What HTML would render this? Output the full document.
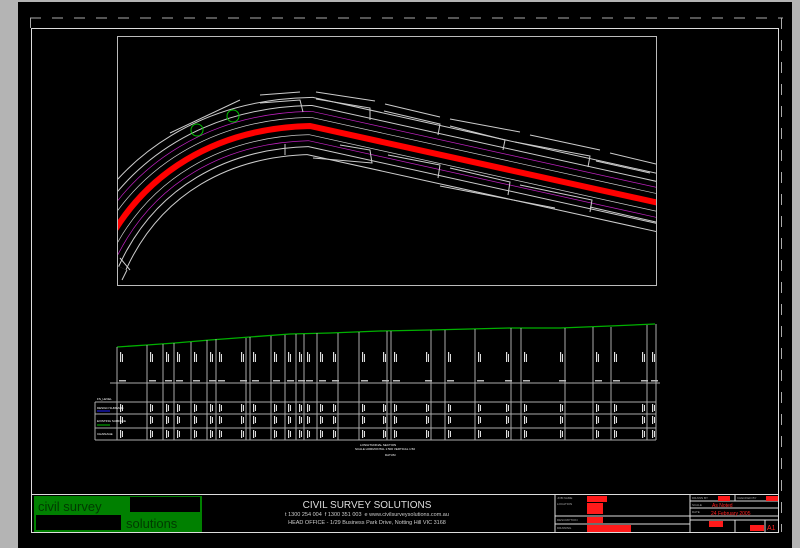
<!DOCTYPE html>
<html><head><meta charset="utf-8"><style>
html,body{margin:0;padding:0;background:#b4b4b4;width:800px;height:548px;overflow:hidden}
svg{position:absolute;left:0;top:0}
text{font-family:"Liberation Sans",sans-serif}
</style></head><body>
<svg width="800" height="548" viewBox="0 0 800 548">
<defs>
<clipPath id="vp"><rect x="118" y="37" width="538" height="248"/></clipPath>
<g id="lab"><rect x="1" y="352" width="1.2" height="10" fill="#ddd"/><rect x="3" y="354" width="1" height="8" fill="#ddd"/>
<rect x="0" y="380" width="7" height="1.5" fill="#bbb"/>
<rect x="1" y="404" width="1.2" height="8" fill="#ddd"/><rect x="3" y="405" width="1" height="6" fill="#ddd"/>
<rect x="1" y="416" width="1.2" height="8" fill="#ddd"/><rect x="3" y="417" width="1" height="6" fill="#ddd"/>
<rect x="1" y="430" width="1.2" height="8" fill="#ddd"/><rect x="3" y="431" width="1" height="6" fill="#ddd"/></g>
</defs>
<rect x="18" y="2" width="774" height="546" fill="#000"/>
<line x1="30" y1="18" x2="783" y2="18" stroke="#aaa" stroke-width="1" stroke-dasharray="11,11"/>
<line x1="30.5" y1="18" x2="30.5" y2="28" stroke="#aaa"/>
<line x1="781.5" y1="18" x2="781.5" y2="532" stroke="#aaa" stroke-dasharray="11,11"/>
<rect x="31.5" y="28.5" width="747" height="504" fill="none" stroke="#ddd" stroke-width="1"/>
<rect x="117.5" y="36.5" width="539" height="249" fill="none" stroke="#bbb"/>
<g clip-path="url(#vp)" fill="none">
<path d="M100,258 C140,170 220,128 310,126 L700,212" stroke="#ccc" stroke-width="58"/>
<path d="M100,258 C140,170 220,128 310,126 L700,212" stroke="#000" stroke-width="56"/>
<path d="M100,258 C140,170 220,128 310,126 L700,212" stroke="#ccc" stroke-width="42"/>
<path d="M100,258 C140,170 220,128 310,126 L700,212" stroke="#000" stroke-width="40"/>
<path d="M100,258 C140,170 220,128 310,126 L700,212" stroke="#c020c0" stroke-width="30"/>
<path d="M100,258 C140,170 220,128 310,126 L700,212" stroke="#000" stroke-width="28.6"/>
<path d="M100,258 C140,170 220,128 310,126 L700,212" stroke="#ccc" stroke-width="18"/>
<path d="M100,258 C140,170 220,128 310,126 L700,212" stroke="#000" stroke-width="16.6"/>
<path d="M100,258 C140,170 220,128 310,126 L700,212" stroke="#ff0000" stroke-width="6"/>
<g stroke="#ccc" stroke-width="1">
<path d="M170,133 L240,100 M260,95 L300,92 M316,92 L375,101 M385,104 L440,117 M450,119 L520,132 M530,135 L600,150 M610,153 L656,164"/>
<path d="M260,103 L300,100 L303,112 M316,99 L370,108 L370,120 M384,111 L440,124 L438,135 M450,126 L505,140 L503,150 M515,142 L590,156 L588,167 M596,161 L650,173"/>
<path d="M285,144 L285,155 M340,145 L370,150 L372,163 L313,158 M388,155 L440,165 L438,178 M450,168 L510,182 L508,195 M520,185 L592,200 L590,212"/>
<path d="M440,186 L555,208 M590,207 L656,222 M120,258 L130,270 M122,280 L127,270"/>
</g>
<circle cx="197" cy="130" r="6" stroke="#00c000"/>
<circle cx="233" cy="116" r="6" stroke="#00c000"/>
</g>
<polyline points="117,347 147,345 175,343 210,340 250,337 290,334 330,333 380,331 430,330 470,329 510,328 560,328 610,326 655,324" fill="none" stroke="#00b000" stroke-width="1.3"/>
<g stroke="#aaa" stroke-width="1">
<path d="M117,347V440 M147,345V440 M163,344V440 M174,343V440 M191,342V440 M207,340V440 M216,339V440 M246,338V440 M250,337V440 M271,336V440 M285,335V440 M296,334V440 M304,334V440 M317,333V440 M338,333V440 M359,332V440 M387,331V440 M391,331V440 M431,330V440 M445,330V440 M475,329V440 M511,328V440 M521,328V440 M565,328V440 M593,327V440 M611,327V440 M647,325V440 M656,324V440"/>
<path d="M110,383H660 M95,402H656 M95,414H656 M95,428H656 M95,440H656 M95,402V440"/>
</g>
<g>
<use href="#lab" x="119"/><use href="#lab" x="149"/><use href="#lab" x="165"/><use href="#lab" x="176"/><use href="#lab" x="193"/><use href="#lab" x="209"/><use href="#lab" x="218"/><use href="#lab" x="240"/><use href="#lab" x="252"/><use href="#lab" x="273"/><use href="#lab" x="287"/><use href="#lab" x="298"/><use href="#lab" x="306"/><use href="#lab" x="319"/><use href="#lab" x="332"/><use href="#lab" x="361"/><use href="#lab" x="382"/><use href="#lab" x="393"/><use href="#lab" x="425"/><use href="#lab" x="447"/><use href="#lab" x="477"/><use href="#lab" x="505"/><use href="#lab" x="523"/><use href="#lab" x="559"/><use href="#lab" x="595"/><use href="#lab" x="613"/><use href="#lab" x="641"/><use href="#lab" x="651"/>
</g>
<g fill="#fff" font-size="3">
<text x="97" y="400">FS_LEVEL</text>
<text x="97" y="409">DESIGN SURFACE</text>
<text x="97" y="422">EXISTING SURFACE</text>
<text x="97" y="435">CHAINAGE</text>
<text x="360" y="446">LONGITUDINAL SECTION</text>
<text x="355" y="450">SCALE HORIZONTAL 1:500 VERTICAL 1:50</text>
<text x="385" y="456">DATUM</text>
</g>
<line x1="97" y1="411" x2="110" y2="411" stroke="#2020ff"/>
<line x1="97" y1="425" x2="110" y2="425" stroke="#00c000"/>
<line x1="31" y1="494.5" x2="779" y2="494.5" stroke="#ddd"/>
<rect x="34" y="496" width="168" height="36" fill="#008000"/>
<rect x="130" y="497" width="70" height="15" fill="#000"/>
<rect x="36" y="515" width="85" height="15" fill="#000"/>
<text x="38" y="511" font-size="13" fill="#003a00" font-family="Liberation Serif">civil survey</text>
<text x="126" y="528" font-size="13" fill="#003a00" font-family="Liberation Serif">solutions</text>
<text x="367" y="508" font-size="10" fill="#ddd" text-anchor="middle">CIVIL SURVEY SOLUTIONS</text>
<text x="367" y="516" font-size="5.5" fill="#ccc" text-anchor="middle">t 1300 254 004  &#160;f 1300 351 003 &#160;e www.civilsurveysolutions.com.au</text>
<text x="367" y="524" font-size="5.5" fill="#ccc" text-anchor="middle">HEAD OFFICE - 1/29 Business Park Drive, Notting Hill  VIC  3168</text>
<g stroke="#ddd" fill="none" stroke-width="1">
<path d="M555,494V533 M690,494V533 M555,516H690 M555,524H690 M690,501H779 M690,508H779 M690,516H779 M690,520H779 M735,494V501 M735,520V533 M765,520V533"/>
</g>
<g fill="#ff1a1a">
<rect x="587" y="496" width="20" height="6"/><rect x="587" y="503" width="16" height="11"/>
<rect x="587" y="517" width="16" height="6"/><rect x="587" y="525" width="44" height="7"/>
<rect x="718" y="496" width="12" height="5"/><rect x="766" y="496" width="12" height="5"/>
<rect x="709" y="521" width="14" height="6"/><rect x="750" y="525" width="14" height="6"/>
</g>
<g font-size="5" fill="#ff2020">
<text x="712" y="507">As Noted</text>
<text x="711" y="515">24 February 2005</text>
<text x="767" y="530" font-size="7">A1</text>
</g>
<g font-size="3" fill="#aaa">
<text x="557" y="499">JOB NAME</text><text x="557" y="505">LOCATION</text>
<text x="557" y="521">DESCRIPTION</text><text x="557" y="529">DRAWING</text>
<text x="692" y="499">DRAWN BY</text><text x="737" y="499">CHECKED BY</text>
<text x="692" y="506">SCALE</text><text x="692" y="513">DATE</text>
</g>
</svg>
</body></html>
